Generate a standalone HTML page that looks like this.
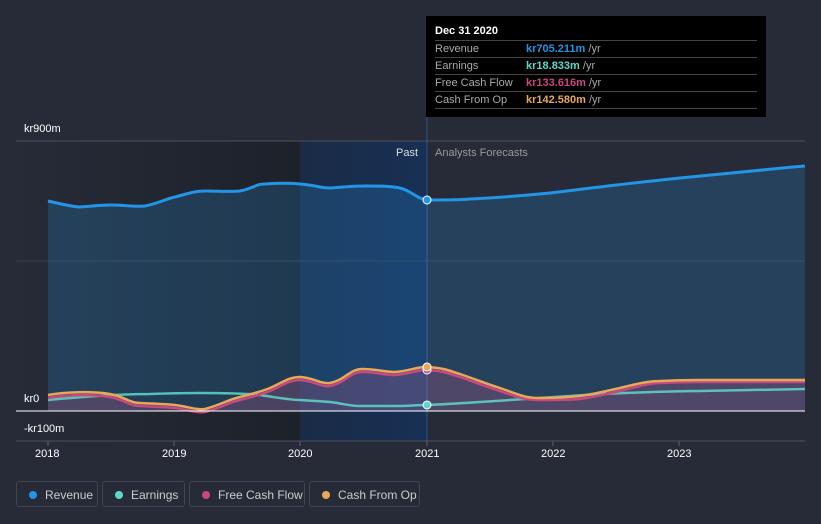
<!DOCTYPE html>
<html><head><meta charset="utf-8"><style>
body{margin:0;width:821px;height:524px;background:#262b37;font-family:"Liberation Sans",sans-serif;overflow:hidden;position:relative}
.t{position:absolute;font-size:11px;color:#fff}
.tip{position:absolute;left:426px;top:16px;width:340px;height:101px;background:#000}
.tip .h{position:absolute;left:9px;top:9px;font-weight:bold;font-size:11px;color:#fff}
.row{position:absolute;left:9px;width:322px;border-top:1px solid #444;height:16px;font-size:11px;color:#aaa;line-height:16px}
.row b{position:absolute;left:91px;font-weight:bold}
.row span{color:#aaa;font-weight:normal}
.leg{position:absolute;top:481px;height:26px;border:1px solid #3f4553;border-radius:3px;font-size:12px;color:#ccc;line-height:26px;box-sizing:border-box}
.leg i{position:absolute;left:12px;top:9px;width:8px;height:8px;border-radius:50%}
</style></head><body>
<svg width="821" height="524" style="position:absolute;left:0;top:0">
<defs>
<linearGradient id="pd" x1="0" x2="1"><stop offset="0" stop-color="#262b37"/><stop offset="1" stop-color="#1d212a"/></linearGradient>
<linearGradient id="bl" x1="0" x2="1"><stop offset="0" stop-color="#1a2b45"/><stop offset="1" stop-color="#173055"/></linearGradient>
</defs>
<rect x="16" y="141" width="284" height="300" fill="url(#pd)"/>
<rect x="300" y="141" width="127" height="300" fill="url(#bl)"/>
<line x1="16" y1="141" x2="805" y2="141" stroke="#4a505c"/>
<line x1="16" y1="261" x2="805" y2="261" stroke="#3a404c"/>
<line x1="16" y1="441" x2="805" y2="441" stroke="#4a505c"/>
<line x1="427" y1="16" x2="427" y2="441" stroke="#2e5a8a"/>
<path d="M48,201 C65,205 75,207 80,207 C95,206 100,205 110,205 C125,205 135,207 145,206 C160,203 165,199 175,197 C190,193 195,191 205,191 C220,191 230,192 240,191 C255,188 255,184 265,184 C280,183 290,183 300,184 C315,185 320,188 330,188 C345,187 350,186 365,186 C380,186 390,186 400,188 C412,191 415,198 427,200 C450,200 460,200 470,199 C510,197 530,195 550,193 C600,187 640,182 680,178 C740,172 770,169 805,166 L805,411 L48,411Z" fill="#2a90e0" fill-opacity="0.22"/>
<path d="M48,201 C65,205 75,207 80,207 C95,206 100,205 110,205 C125,205 135,207 145,206 C160,203 165,199 175,197 C190,193 195,191 205,191 C220,191 230,192 240,191 C255,188 255,184 265,184 C280,183 290,183 300,184 C315,185 320,188 330,188 C345,187 350,186 365,186 C380,186 390,186 400,188 C412,191 415,198 427,200 C450,200 460,200 470,199 C510,197 530,195 550,193 C600,187 640,182 680,178 C740,172 770,169 805,166" fill="none" stroke="#2394e6" stroke-width="3"/>
<path d="M48,395 C65,392 90,391 110,394 C125,397 130,403 140,403 C160,404 165,404 175,405 C190,407 195,410 205,409 C220,405 230,399 240,397 C255,393 260,392 270,388 C285,381 290,377 300,377 C315,378 320,384 330,383 C345,380 350,369 362,369 C375,369 385,372 395,372 C410,371 415,367 427,367 C445,368 450,371 460,374 C480,381 490,385 500,388 C520,395 525,398 540,398 C560,398 570,397 580,396 C600,393 610,390 620,388 C640,383 650,381 660,381 C680,380 690,380 700,380 L805,380 L805,411 L48,411Z" fill="#c85a8a" fill-opacity="0.25"/>
<path d="M48,400 C80,397 120,394 150,394 C180,393 190,393 200,393 C230,393 250,394 260,395 C280,398 290,400 300,400 C315,401 320,401 330,402 C345,404 350,406 360,406 L400,406 C410,406 415,405 427,405 C450,404 465,403 480,402 C510,400 525,399 540,398 C570,396 585,395 600,394 C650,392 680,391 700,391 L805,389" fill="none" stroke="#5fd7c8" stroke-width="2.5" opacity="0.85"/>
<path d="M48,398 C65,395 90,394 110,397 C125,400 130,406 140,406 C160,407 165,407 175,408 C190,410 195,413 205,412 C220,408 230,402 240,400 C255,396 260,395 270,391 C285,384 290,380 300,380 C315,381 320,387 330,386 C345,383 350,372 362,372 C375,372 385,375 395,375 C410,374 415,370 427,370 C445,371 450,374 460,377 C480,384 490,388 500,391 C520,398 525,400 540,400 C560,400 570,400 580,399 C600,396 610,393 620,391 C640,386 650,383 660,383 C680,382 690,382 700,382 L805,382" fill="none" stroke="#c9487e" stroke-width="2.5"/>
<path d="M48,395 C65,392 90,391 110,394 C125,397 130,403 140,403 C160,404 165,404 175,405 C190,407 195,410 205,409 C220,405 230,399 240,397 C255,393 260,392 270,388 C285,381 290,377 300,377 C315,378 320,384 330,383 C345,380 350,369 362,369 C375,369 385,372 395,372 C410,371 415,367 427,367 C445,368 450,371 460,374 C480,381 490,385 500,388 C520,395 525,398 540,398 C560,398 570,397 580,396 C600,393 610,390 620,388 C640,383 650,381 660,381 C680,380 690,380 700,380 L805,380" fill="none" stroke="#e8a85a" stroke-width="2.5"/>
<line x1="16" y1="411" x2="805" y2="411" stroke="#fff" stroke-width="1"/>
<circle cx="427" cy="200" r="4" fill="#2394e6" stroke="#fff" stroke-width="1"/>
<circle cx="427" cy="405" r="4" fill="#5fd7c8" stroke="#fff" stroke-width="1"/>
<circle cx="427" cy="370" r="4" fill="#c9487e" stroke="#fff" stroke-width="1"/>
<circle cx="427" cy="367" r="4" fill="#e8a85a" stroke="#fff" stroke-width="1"/>
<g stroke="#5a606c"><line x1="48" y1="441" x2="48" y2="446"/><line x1="174" y1="441" x2="174" y2="446"/><line x1="300" y1="441" x2="300" y2="446"/><line x1="427" y1="441" x2="427" y2="446"/><line x1="553" y1="441" x2="553" y2="446"/><line x1="679" y1="441" x2="679" y2="446"/></g>
</svg>
<div class="t" style="left:24px;top:123px">kr900m</div>
<div class="t" style="left:24px;top:393px">kr0</div>
<div class="t" style="left:24px;top:423px">-kr100m</div>
<div class="t" style="left:396px;top:147px;color:#ddd">Past</div>
<div class="t" style="left:435px;top:147px;color:#999">Analysts Forecasts</div>
<div class="t" style="left:35px;top:448px">2018</div>
<div class="t" style="left:162px;top:448px">2019</div>
<div class="t" style="left:288px;top:448px">2020</div>
<div class="t" style="left:415px;top:448px">2021</div>
<div class="t" style="left:541px;top:448px">2022</div>
<div class="t" style="left:667px;top:448px">2023</div>
<div class="tip"><div class="h">Dec 31 2020</div>
<div class="row" style="top:24px">Revenue<b style="color:#2394e6">kr705.211m <span>/yr</span></b></div>
<div class="row" style="top:41px">Earnings<b style="color:#5fd7c8">kr18.833m <span>/yr</span></b></div>
<div class="row" style="top:58px">Free Cash Flow<b style="color:#c9487e">kr133.616m <span>/yr</span></b></div>
<div class="row" style="top:75px">Cash From Op<b style="color:#e8a85a">kr142.580m <span>/yr</span></b></div>
<div class="row" style="top:92px;height:0"></div>
</div>
<div class="leg" style="left:16px;width:82px"><i style="background:#2394e6"></i><span style="position:absolute;left:28px">Revenue</span></div>
<div class="leg" style="left:102px;width:83px"><i style="background:#5fd7c8"></i><span style="position:absolute;left:28px">Earnings</span></div>
<div class="leg" style="left:189px;width:116px"><i style="background:#c9487e"></i><span style="position:absolute;left:28px">Free Cash Flow</span></div>
<div class="leg" style="left:309px;width:111px"><i style="background:#e8a85a"></i><span style="position:absolute;left:28px">Cash From Op</span></div>
</body></html>
